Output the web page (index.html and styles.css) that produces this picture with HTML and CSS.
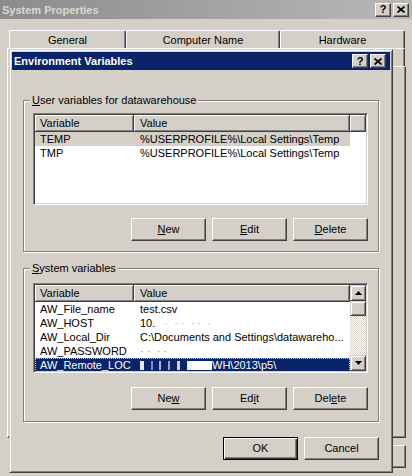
FILE: index.html
```html
<!DOCTYPE html>
<html>
<head>
<meta charset="utf-8">
<link rel="stylesheet" href="styles.css">
</head>
<body>
<div class="sys">
  <div class="sys-title">
    <span class="sys-title-text">System Properties</span>
    <div class="cap-btns">
      <span class="cap-btn">?</span>
      <span class="cap-btn"><svg width="8" height="7" viewBox="0 0 8 7"><path d="M0.5 0.5L7.5 6.5M7.5 0.5L0.5 6.5" stroke="#000" stroke-width="1.7"/></svg></span>
    </div>
  </div>
  <div class="tabs">
    <div class="tab tab-general">General</div>
    <div class="tab tab-computer">Computer Name</div>
    <div class="tab tab-hardware">Hardware</div>
  </div>
  <div class="tabs2"><div class="tab2"></div></div>
  <div class="panel"></div>
  <div class="sys-btns"><div class="btn sys-btn"></div></div>
</div>

<div class="dlg">
  <div class="dlg-title">
    <span>Environment Variables</span>
    <div class="cap-btns">
      <span class="cap-btn">?</span>
      <span class="cap-btn"><svg width="8" height="7" viewBox="0 0 8 7"><path d="M0.5 0.5L7.5 6.5M7.5 0.5L0.5 6.5" stroke="#000" stroke-width="1.7"/></svg></span>
    </div>
  </div>
  <div class="dlg-body">
    <div class="group group-user">
      <span class="group-label"><u>U</u>ser variables for datawarehouse</span>
      <div class="list list-user">
        <div class="lhead">
          <div class="hcell c1">Variable</div>
          <div class="hcell c2">Value</div>
          <div class="hcell filler"></div>
        </div>
        <div class="row sel-gray"><div class="cell c1">TEMP</div><div class="cell c2">%USERPROFILE%\Local Settings\Temp</div></div>
        <div class="row"><div class="cell c1">TMP</div><div class="cell c2">%USERPROFILE%\Local Settings\Temp</div></div>
      </div>
      <div class="btn-row">
        <div class="btn"><span><u>N</u>ew</span></div>
        <div class="btn"><span><u>E</u>dit</span></div>
        <div class="btn"><span><u>D</u>elete</span></div>
      </div>
    </div>

    <div class="group group-sys">
      <span class="group-label"><u>S</u>ystem variables</span>
      <div class="list list-sys">
        <div class="tbl">
          <div class="lhead">
            <div class="hcell c1">Variable</div>
            <div class="hcell c2">Value</div>
          </div>
          <div class="row"><div class="cell c1">AW_File_name</div><div class="cell c2">test.csv</div></div>
          <div class="row"><div class="cell c1">AW_HOST</div><div class="cell c2">10.<span class="specks">&nbsp;&nbsp;&nbsp;·&nbsp;&nbsp;·&nbsp;·&nbsp;&nbsp;·&nbsp;·&nbsp;&nbsp;·</span></div></div>
          <div class="row"><div class="cell c1">AW_Local_Dir</div><div class="cell c2">C:\Documents and Settings\datawareho...</div></div>
          <div class="row"><div class="cell c1">AW_PASSWORD</div><div class="cell c2"><span class="specks dark">·&nbsp;·&nbsp;&nbsp;·&nbsp;·</span></div></div>
          <div class="row sel-blue"><div class="cell c1">AW_Remote_LOC</div><div class="cell c2"><span class="redact"></span>WH\2013\p5\</div></div>
        </div>
        <div class="vscroll">
          <div class="sb-btn"><svg width="7" height="4" viewBox="0 0 7 4"><path d="M3.5 0L7 4H0z" fill="#000"/></svg></div>
          <div class="sb-thumb"></div>
          <div class="sb-track"></div>
          <div class="sb-btn"><svg width="7" height="4" viewBox="0 0 7 4"><path d="M0 0H7L3.5 4z" fill="#000"/></svg></div>
        </div>
      </div>
      <div class="btn-row">
        <div class="btn"><span>Ne<u>w</u></span></div>
        <div class="btn"><span>Ed<u>i</u>t</span></div>
        <div class="btn"><span>Del<u>e</u>te</span></div>
      </div>
    </div>

    <div class="dlg-btns">
      <div class="btn btn-default"><span>OK</span></div>
      <div class="btn"><span>Cancel</span></div>
    </div>
  </div>
</div>
</body>
</html>
```

FILE: styles.css
```css
* { box-sizing: border-box; }
html, body { margin: 0; padding: 0; }
body {
  width: 412px;
  height: 476px;
  overflow: hidden;
  position: relative;
  background: #d4d0c8;
  font: 11px "Liberation Sans", Arial, sans-serif;
  color: #000;
}
u { text-underline-offset: 1px; }

/* background window */
.sys-title {
  height: 19px;
  background: linear-gradient(to right, #8c8c8c, #b8b8b8);
  display: flex;
  align-items: center;
  justify-content: space-between;
  padding: 0 3px 0 2px;
}
.sys-title-text { font-weight: bold; color: #dcd8d0; }
.cap-btns { display: flex; gap: 2px; }
.cap-btn {
  width: 16px;
  height: 14px;
  background: #d4d0c8;
  border: 1px solid;
  border-color: #fff #404040 #404040 #fff;
  box-shadow: inset -1px -1px #808080;
  display: flex;
  align-items: center;
  justify-content: center;
  font-weight: bold;
  font-size: 11px;
  line-height: 1;
  color: #000;
}

.tabs { display: flex; margin-top: 11px; padding-left: 9px; height: 18px; }
.tab {
  height: 18px;
  border-top: 1px solid #fff;
  border-left: 1px solid #fff;
  border-right: 1px solid #404040;
  box-shadow: inset -1px 0 #808080;
  border-radius: 2px 2px 0 0;
  text-align: center;
  padding-top: 3px;
  line-height: 13px;
}
.tab-general { width: 117px; }
.tab-computer { width: 154px; }
.tab-hardware { width: 125px; }

.tabs2 { height: 18px; padding-left: 7px; }
.tab2 {
  width: 398px;
  height: 18px;
  border-top: 1px solid #fff;
  border-left: 1px solid #fff;
  border-right: 1px solid #404040;
  box-shadow: inset -1px 0 #808080;
}
.panel {
  margin-left: 7px;
  width: 399px;
  height: 372px;
  border: 1px solid;
  border-color: #fff #404040 #404040 #fff;
  box-shadow: inset -1px -1px #808080;
}
.sys-btns { display: flex; justify-content: flex-end; padding-right: 6px; margin-top: 7px; }
.sys-btn { height: 22px; }

/* buttons */
.btn {
  width: 75px;
  height: 23px;
  background: #d4d0c8;
  border: 1px solid;
  border-color: #fff #404040 #404040 #fff;
  box-shadow: inset -1px -1px #808080;
  display: flex;
  align-items: center;
  justify-content: center;
  line-height: 13px;
}
.btn-default {
  border: 1px solid #000;
  box-shadow: inset 1px 1px #fff, inset -1px -1px #404040, inset -2px -2px #808080;
}

/* dialog window */
.dlg {
  position: absolute;
  left: 9px;
  top: 49px;
  width: 384px;
  height: 424px;
  background: #d4d0c8;
  border: 1px solid;
  border-color: #d4d0c8 #404040 #404040 #d4d0c8;
  box-shadow: inset 1px 1px #fff, inset -1px -1px #808080;
  padding: 2px;
}
.dlg-title {
  height: 18px;
  background: #0a246a;
  color: #fff;
  font-weight: bold;
  display: flex;
  align-items: center;
  justify-content: space-between;
  padding: 0 4px 0 2px;
}
.dlg-body { padding: 0 11px; }

.group {
  position: relative;
  border: 1px solid #808080;
  box-shadow: inset 1px 1px #fff, 1px 1px #fff;
  padding: 0 10px 0 9px;
}
.group-user { margin-top: 30px; height: 152px; padding-top: 12px; }
.group-sys { margin-top: 16px; height: 154px; padding-top: 14px; }
.group-label {
  position: absolute;
  top: -7px;
  left: 6px;
  padding: 0 2px;
  line-height: 13px;
  background: #d4d0c8;
}

.list {
  width: 335px;
  background: #fff;
  border: 1px solid;
  border-color: #808080 #fff #fff #808080;
  box-shadow: inset 1px 1px #404040, inset -1px -1px #d4d0c8;
  padding: 1px;
  overflow: hidden;
}
.list-user { height: 92px; }
.list-sys { height: 90px; display: flex; }

.lhead { display: flex; height: 17px; }
.hcell {
  height: 17px;
  background: #d4d0c8;
  border-right: 1px solid #404040;
  border-bottom: 1px solid #404040;
  box-shadow: inset 1px 1px #fff, inset -1px -1px #808080;
  line-height: 16px;
  white-space: nowrap;
}
.c1 { width: 99px; padding-left: 5px; }
.c2 { width: 216px; padding-left: 6px; }
.filler { flex: 1; }

.row { display: flex; width: 315px; height: 14px; line-height: 14px; white-space: nowrap; }
.cell { overflow: hidden; }
.sel-gray { background: #d4d0c8; }
.sel-blue { background: #0a246a; color: #fff; outline: 1px dotted #c8c890; outline-offset: -1px; }

.specks { color: #b8b8b8; }
.specks.dark { color: #888; }
.redact {
  display: inline-block;
  width: 72px;
  height: 9px;
  vertical-align: -1px;
  background: linear-gradient(90deg,
    #e8e8f0 0 4px, transparent 4px 11px,
    #8890b8 11px 13px, transparent 13px 19px,
    #b0b4d0 19px 21px, transparent 21px 28px,
    #9ca0c4 28px 30px, transparent 30px 37px,
    #d0d0e0 37px 40px, transparent 40px 47px,
    #f0f0f4 47px 52px, #fff 52px 100%);
}

.tbl { width: 315px; height: 86px; overflow: hidden; }
.vscroll { width: 16px; height: 86px; display: flex; flex-direction: column; }
.sb-btn, .sb-thumb {
  background: #d4d0c8;
  border: 1px solid;
  border-color: #d4d0c8 #404040 #404040 #d4d0c8;
  box-shadow: inset 1px 1px #fff, inset -1px -1px #808080;
}
.sb-btn { height: 16px; display: flex; align-items: center; justify-content: center; }
.sb-thumb { height: 15px; }
.sb-track {
  flex: 1;
  background: repeating-conic-gradient(#fff 0 25%, #d4d0c8 0 50%) 0 0 / 2px 2px;
}

.btn-row { display: flex; justify-content: flex-end; gap: 6px; margin-top: 13px; }
.group-sys .btn-row { margin-top: 14px; }

.dlg-btns { display: flex; justify-content: flex-end; gap: 6px; margin-top: 15px; }
```
